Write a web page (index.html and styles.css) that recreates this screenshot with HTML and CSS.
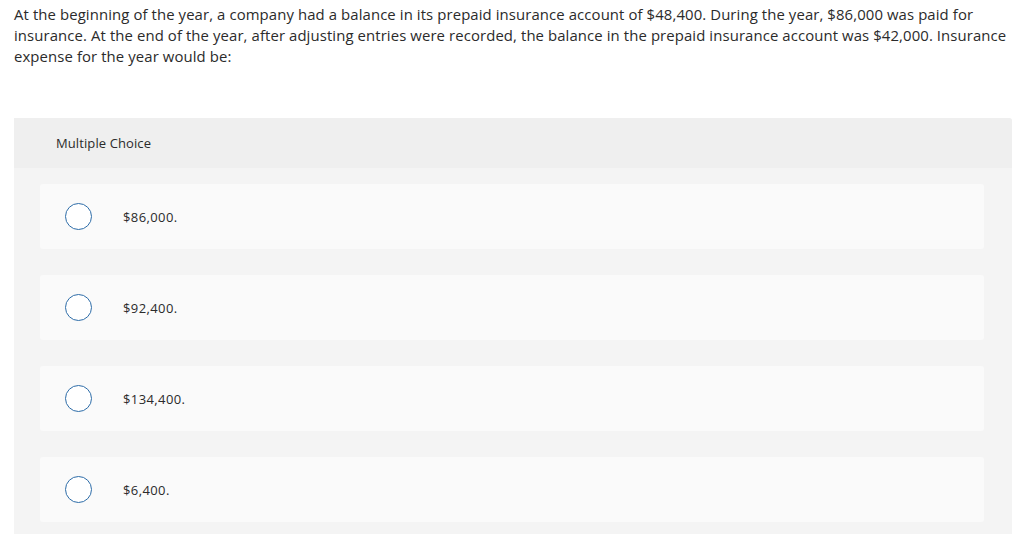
FILE: index.html
```html
<!DOCTYPE html>
<html>
<head>
<meta charset="utf-8">
<link rel="stylesheet" href="styles.css">
</head>
<body>
<div class="question">At the beginning of the year, a company had a balance in its prepaid insurance account of $48,400. During the year, $86,000 was paid for insurance. At the end of the year, after adjusting entries were recorded, the balance in the prepaid insurance account was $42,000. Insurance expense for the year would be:</div>
<div class="panel">
  <div class="panel-head">Multiple Choice</div>
  <div class="panel-body">
    <div class="choice"><span class="radio"></span><span class="label">$86,000.</span></div>
    <div class="choice"><span class="radio"></span><span class="label">$92,400.</span></div>
    <div class="choice"><span class="radio"></span><span class="label">$134,400.</span></div>
    <div class="choice"><span class="radio"></span><span class="label">$6,400.</span></div>
  </div>
</div>
</body>
</html>
```
FILE: styles.css
```css
body {
  margin: 0;
  padding: 4px 14px 0 14px;
  font-family: "Open Sans", "Liberation Sans", sans-serif;
  color: #2b2b2b;
  background: #fff;
}
.question {
  font-size: 14.9px;
  line-height: 21px;
  letter-spacing: 0.1px;
}
.panel {
  margin-top: 51px;
  margin-right: 8px;
  background: #f4f4f4;
  border-radius: 0 3px 0 0;
}
.panel-head {
  background: #efefef;
  height: 50px;
  display: flex;
  align-items: center;
  padding-left: 42px;
  font-size: 13px;
  letter-spacing: 0.1px;
  border-radius: 0 3px 0 0;
}
.panel-body {
  padding: 16px 28px 12px 26px;
  display: flex;
  flex-direction: column;
  gap: 26px;
}
.choice {
  background: #fafafa;
  height: 65px;
  border-radius: 3px;
  display: flex;
  align-items: center;
  padding-left: 25px;
}
.radio {
  width: 25px;
  height: 25px;
  border: 1px solid #2d6ca8;
  border-radius: 50%;
  background: #fff;
  flex: none;
}
.label {
  margin-left: 31px;
  font-size: 13px;
  letter-spacing: 0.4px;
}
```
